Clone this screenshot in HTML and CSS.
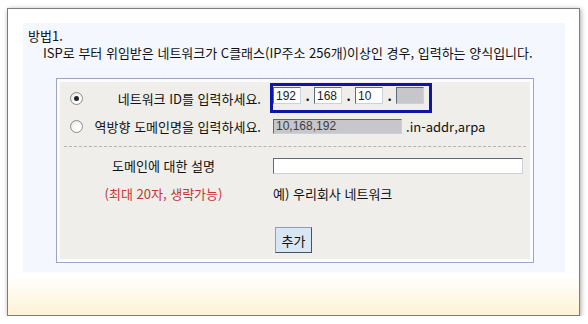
FILE: index.html
```html
<!DOCTYPE html>
<html lang="ko">
<head>
    <meta charset="UTF-8">
    <title>네트워크 ID 입력</title>
    <link rel="stylesheet" href="styles.css">
</head>
<body>
    <div class="frame">
        <div class="sheet">
            <p class="title">방법1.</p>
            <p class="desc">ISP로 부터 위임받은 네트워크가 C클래스(IP주소 256개)이상인 경우, 입력하는 양식입니다.</p>

            <div class="box">
                <div class="panel">
                    <div class="row row-net">
                        <div class="cell-left">
                            <span class="radio on"></span>
                            <span class="label">네트워크 ID를 입력하세요.</span>
                        </div>
                        <div class="cell-right">
                            <div class="ip-group">
                                <input class="ip" type="text" value="192">
                                <span class="dot">.</span>
                                <input class="ip" type="text" value="168">
                                <span class="dot">.</span>
                                <input class="ip" type="text" value="10">
                                <span class="dot">.</span>
                                <input class="ip off" type="text" value="" disabled>
                            </div>
                        </div>
                    </div>

                    <div class="row row-rev">
                        <div class="cell-left">
                            <span class="radio"></span>
                            <span class="label">역방향 도메인명을 입력하세요.</span>
                        </div>
                        <div class="cell-right">
                            <input class="rev" type="text" value="10,168,192" disabled>
                            <span class="suffix">.in-addr,arpa</span>
                        </div>
                    </div>

                    <div class="divider"></div>

                    <div class="row row-desc">
                        <div class="cell-left center">도메인에 대한 설명</div>
                        <div class="cell-right">
                            <input class="text" type="text" value="">
                        </div>
                    </div>

                    <div class="row row-hint">
                        <div class="cell-left center hint">(최대 20자, 생략가능)</div>
                        <div class="cell-right">예) 우리회사 네트워크</div>
                    </div>

                    <div class="actions">
                        <button class="add-btn">추가</button>
                    </div>
                </div>
            </div>
        </div>
    </div>
</body>
</html>
```

FILE: styles.css
```css
* {
    margin: 0;
    padding: 0;
    box-sizing: border-box;
}

body {
    font-family: 'Noto Sans CJK KR', 'Liberation Sans', sans-serif;
    font-size: 13px;
    color: #111;
    background: #fff;
}

.frame {
    margin: 8px 0 0 7px;
    width: 573px;
    height: 308px;
    border: 1px solid #7c7c7c;
    padding: 14px 0 0 15px;
    background: linear-gradient(to bottom, #fff 0, #fff 266px, #fdf3d4 100%);
    box-shadow: 1px 1px 5px rgba(0, 0, 0, 0.35);
}

.sheet {
    width: 542px;
    height: 249px;
    background: #f4f8fe;
    padding: 4px 0 0 5px;
}

.title,
.desc {
    line-height: 17px;
}

.desc {
    padding-left: 15px;
    white-space: nowrap;
}

.box {
    margin: 17px 0 0 28px;
    width: 478px;
    border: 1px solid #a2a2c6;
    padding: 3px;
    background: #fbfcfe;
}

.panel {
    background: #efeeea;
    padding: 1px 0 6px;
}

.row {
    display: flex;
    align-items: center;
}

.row-net {
    height: 30px;
}

.row-rev {
    height: 26px;
}

.row-desc {
    height: 37px;
}

.row-hint {
    height: 18px;
}

.cell-left {
    width: 213px;
    display: flex;
    align-items: center;
    padding: 0 12px 0 10px;
    white-space: nowrap;
}

.cell-left.center {
    justify-content: center;
    padding: 0 6px 0 0;
}

.cell-right {
    flex: 1;
    display: flex;
    align-items: center;
}

.label {
    flex: 1;
    text-align: right;
}

.hint {
    color: #c83434;
}

.radio {
    width: 13px;
    height: 13px;
    border-radius: 50%;
    border: 1px solid #8c8d8d;
    background: radial-gradient(circle at 65% 65%, #fff 30%, #dcdcd6 100%);
    display: flex;
    align-items: center;
    justify-content: center;
}

.radio.on::after {
    content: '';
    width: 5px;
    height: 5px;
    border-radius: 50%;
    background: #222;
}

.ip-group {
    display: flex;
    align-items: flex-start;
    height: 30px;
    margin-left: -3px;
    border: 3px solid #0b18a6;
    padding: 1px 5px 0 0;
}

input {
    font-family: 'Liberation Sans', sans-serif;
    font-size: 12px;
    color: #222;
    border: 1px solid #c9d1d9;
    border-top-color: #5d6c7b;
    border-left-color: #5d6c7b;
    background: #fff;
    padding: 0 2px;
    outline: none;
}

.ip {
    width: 28px;
    height: 17px;
}

.ip.off,
.rev {
    background: #c6c6cb;
}

.dot {
    width: 13px;
    text-align: center;
    font-weight: bold;
    line-height: 17px;
}

.rev {
    width: 129px;
    height: 15px;
    color: #3c3c3c;
}

.suffix {
    margin-left: 4px;
}

.divider {
    margin: 7px 4px 0;
    border-top: 1px dashed #b4b4b4;
}

.text {
    width: 250px;
    height: 16px;
}

.actions {
    padding: 25px 0 0 215px;
}

.add-btn {
    width: 37px;
    height: 26px;
    font-family: 'Noto Sans CJK KR', sans-serif;
    font-size: 13px;
    color: #111;
    background: #d9e6f3;
    border: 1px solid #8aa0b8;
    border-right-color: #405468;
    border-bottom-color: #405468;
}
```
